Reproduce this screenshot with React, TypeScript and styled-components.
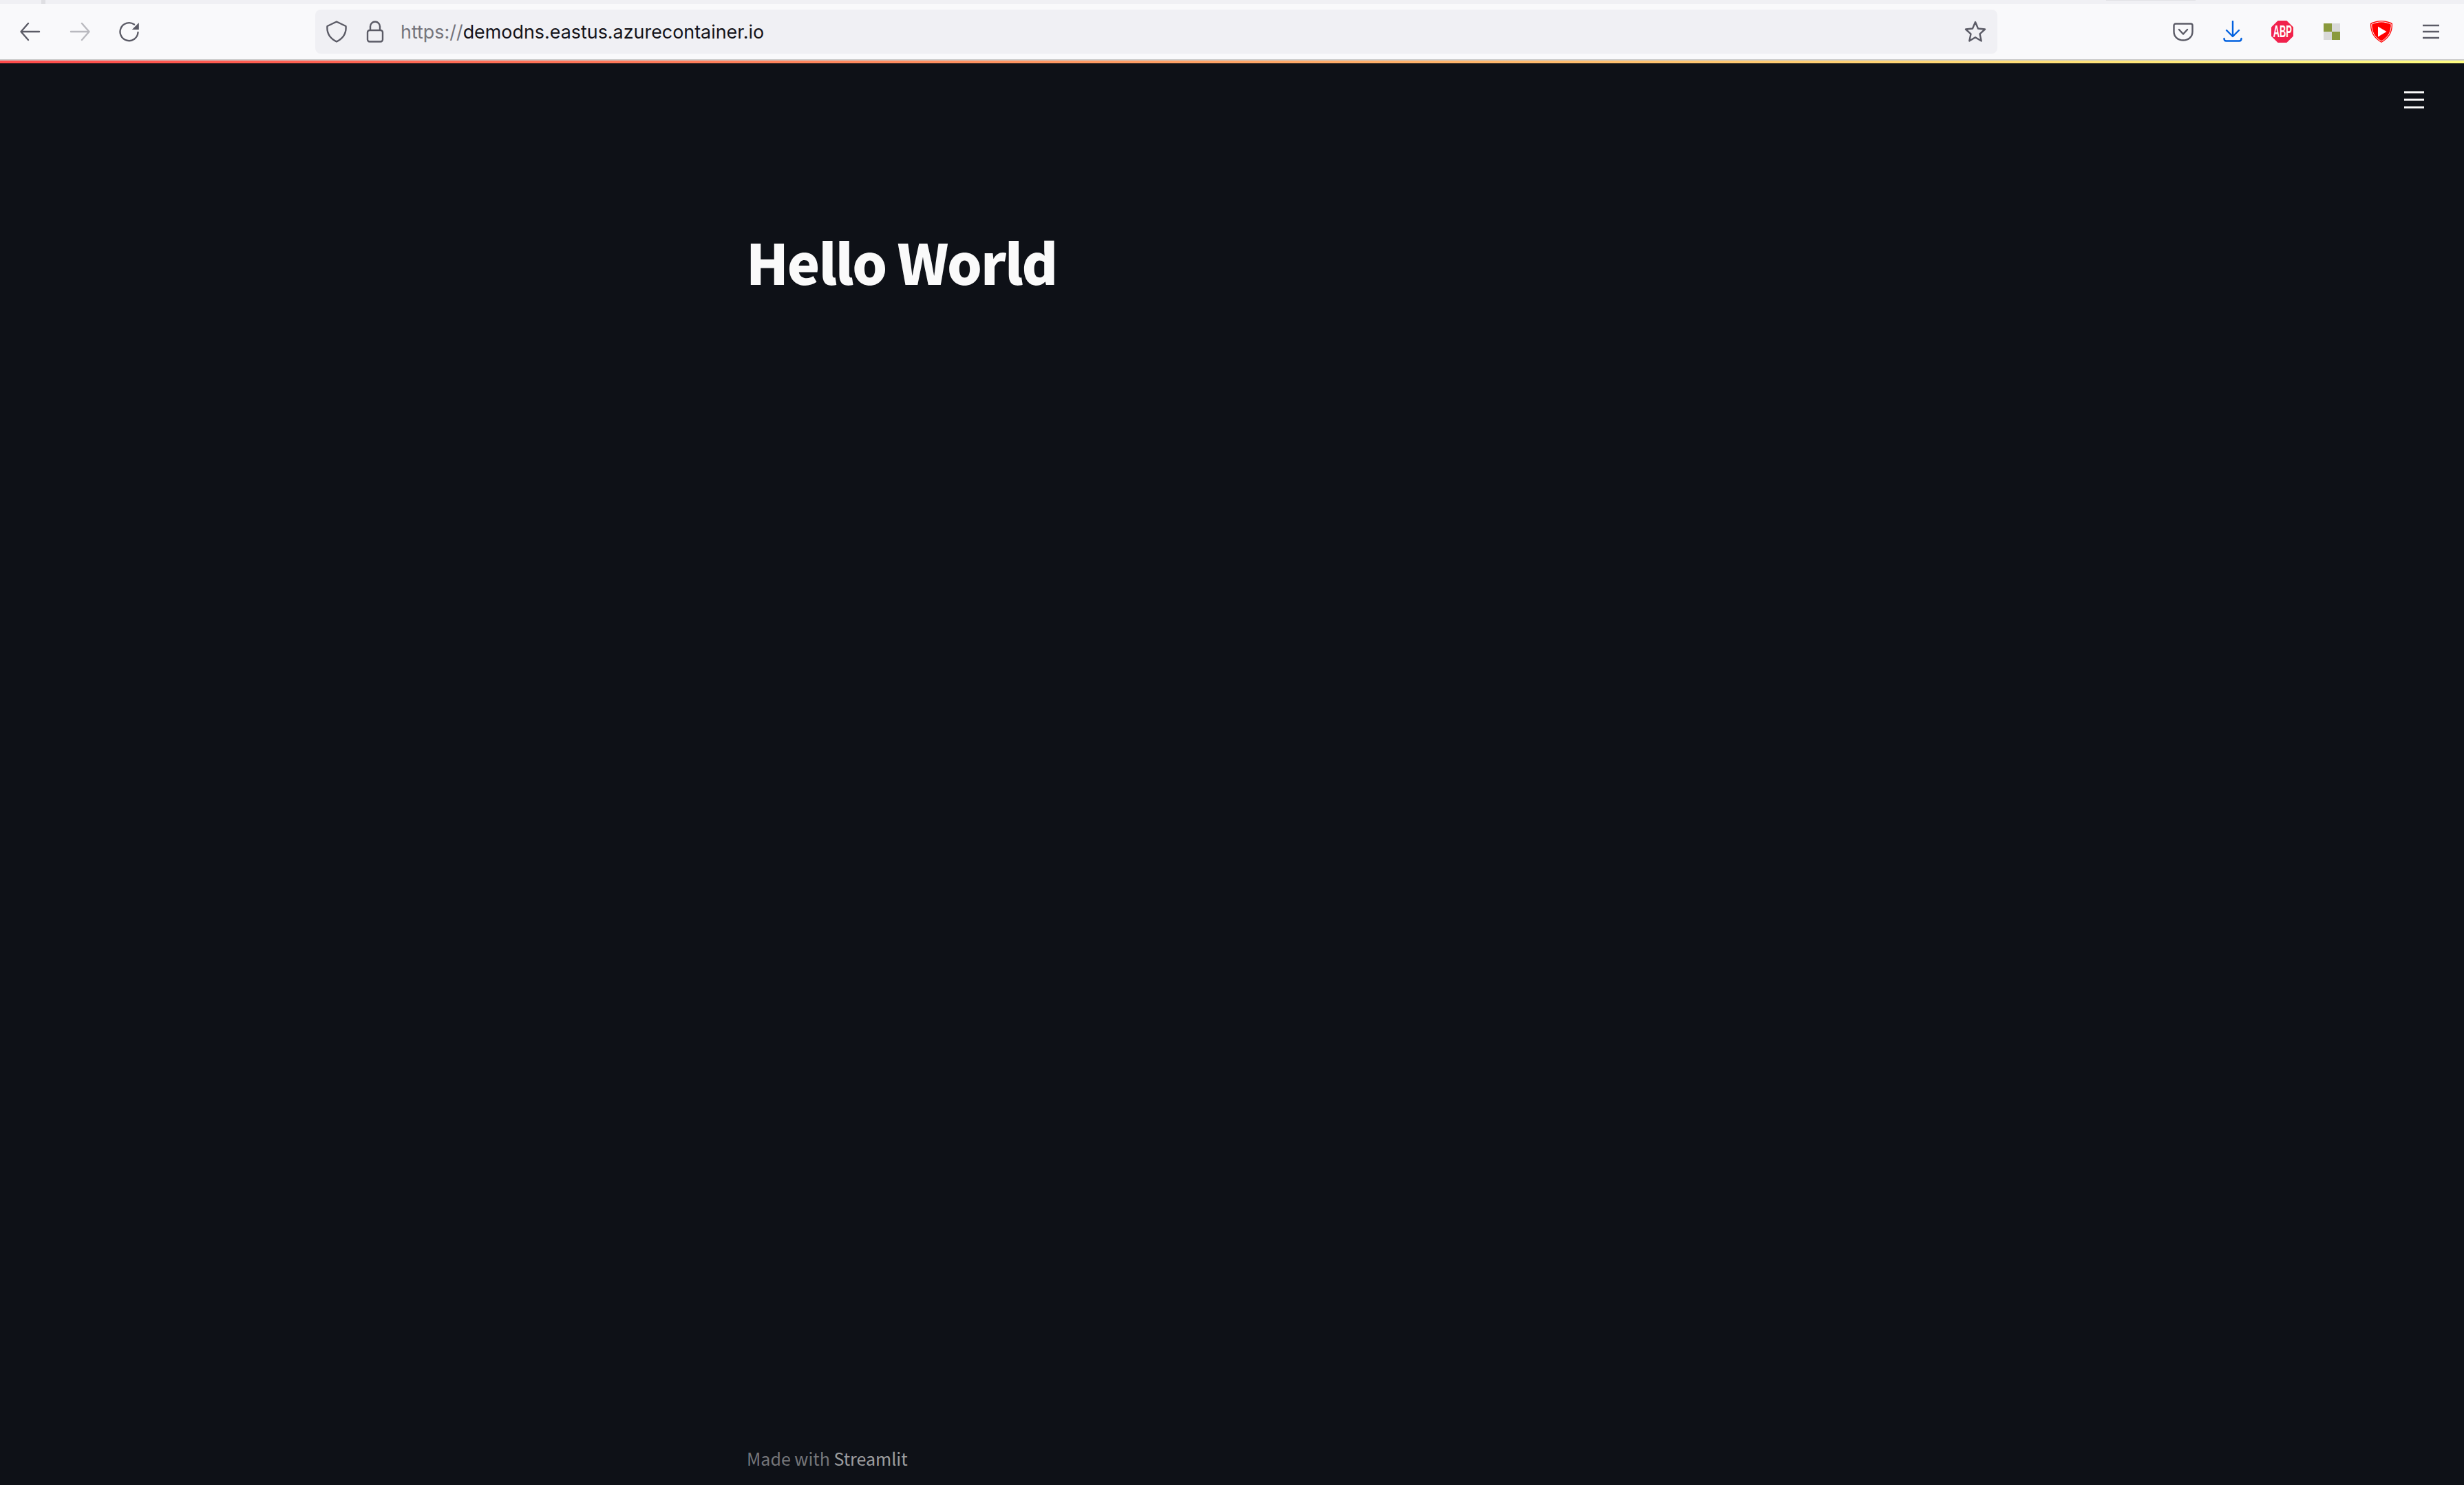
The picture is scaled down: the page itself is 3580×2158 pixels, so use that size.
import React from 'react';
import styled, { createGlobalStyle } from 'styled-components';

const GlobalStyle = createGlobalStyle`
  html, body, #root {
    margin: 0;
    height: 100%;
  }
  body {
    background: #0e1117;
    overflow: hidden;
  }
`;

const App: React.FC = () => (
  <Page>
    <GlobalStyle />
    <TabStrip>
      <TabEdge />
      <TabShadow />
    </TabStrip>
    <Toolbar>
      <NavButton>
        <svg width="32" height="32" viewBox="0 0 32 32" fill="none" stroke="#5b5b66" strokeWidth="2.4" strokeLinecap="round" strokeLinejoin="round">
          <path d="M29 16H3M13 4 2.5 16 13 28" />
        </svg>
      </NavButton>
      <NavButton dimmed>
        <svg width="32" height="32" viewBox="0 0 32 32" fill="none" stroke="#5b5b66" strokeWidth="2.4" strokeLinecap="round" strokeLinejoin="round">
          <path d="M3 16h26M19 4l10.500 12L19 28" />
        </svg>
      </NavButton>
      <NavButton>
        <svg width="32" height="32" viewBox="0 0 32 32" fill="none">
          <path d="M28.500 17A13 13 0 1 1 23 5.500" stroke="#5b5b66" strokeWidth="2.4" strokeLinecap="round" />
          <path d="M29.800 3v10h-10z" fill="#5b5b66" />
        </svg>
      </NavButton>
      <UrlBar>
        <UrlIcon>
          <svg width="32" height="32" viewBox="0 0 32 32" fill="none" stroke="#5b5b66" strokeWidth="2.4" strokeLinejoin="round">
            <path d="M16 1.500 29.500 8c.8 9-3.500 17.500-13.500 22.500C6 25.500 1.700 17 2.500 8z" />
          </svg>
        </UrlIcon>
        <UrlIcon>
          <svg width="32" height="32" viewBox="0 0 32 32" fill="none" stroke="#5b5b66" strokeWidth="2.4" strokeLinejoin="round">
            <rect x="5" y="14" width="22" height="16.500" rx="3" />
            <path d="M9 14V8.500a7 7 0 0 1 14 0V14" />
          </svg>
        </UrlIcon>
        <UrlText>
          <UrlScheme>https://</UrlScheme>demodns.eastus.azurecontainer.io
        </UrlText>
        <svg width="32" height="32" viewBox="0 0 32 32" fill="none" stroke="#5b5b66" strokeWidth="2.4" strokeLinejoin="round">
          <path d="M16 2l4 9.500 10 1-7.500 6.800L24.700 29.500 16 24.200 7.300 29.500l2.200-10.200L2 12.500l10-1z" />
        </svg>
      </UrlBar>
      <NavButton>
        <svg width="32" height="32" viewBox="0 0 32 32" fill="none" stroke="#5b5b66" strokeWidth="2.4" strokeLinecap="round" strokeLinejoin="round">
          <path d="M5 4.500h22a2.500 2.500 0 0 1 2.500 2.500v9c0 7.500-6 12.500-13.500 12.500S2.500 23.500 2.500 16V7A2.500 2.500 0 0 1 5 4.500z" />
          <path d="M10 13l6 6.500 6-6.500" />
        </svg>
      </NavButton>
      <NavButton>
        <svg width="32" height="32" viewBox="0 0 32 32" fill="none" stroke="#0060df" strokeWidth="2.4" strokeLinecap="round" strokeLinejoin="round">
          <path d="M16 1v21M7 14l9 9 9-9M3.500 26c0 2 1 3.500 3 3.500h19c2 0 3-1.500 3-3.500" />
        </svg>
      </NavButton>
      <NavButton>
        <AbpBadge>
          <AbpLabel>ABP</AbpLabel>
        </AbpBadge>
      </NavButton>
      <NavButton>
        <Checker>
          <CheckerCell filled />
          <CheckerCell />
          <CheckerCell />
          <CheckerCell filled />
        </Checker>
      </NavButton>
      <NavButton>
        <svg width="32" height="32" viewBox="0 0 32 32">
          <path d="M16 0c5 0 11 1.500 16 4 .5 11-3.500 21-16 28C3.500 25-.5 15 0 4c5-2.500 11-4 16-4z" fill="#ff0000" />
          <path d="M16 1.800c4.500 0 9.800 1.300 14.200 3.400.2 9.700-3.300 18.600-14.200 24.800C5.100 23.800 1.600 14.900 1.800 5.200 6.200 3.100 11.500 1.800 16 1.800z" fill="none" stroke="#fff" strokeWidth="1" />
          <path d="M11 8.500 23.500 16 11 23.500z" fill="#fff" />
        </svg>
      </NavButton>
      <NavButton>
        <svg width="32" height="32" viewBox="0 0 32 32" fill="none" stroke="#5b5b66" strokeWidth="2.4">
          <path d="M4 7h24M4 16h24M4 25h24" />
        </svg>
      </NavButton>
    </Toolbar>
    <Decoration />
    <Main>
      <MenuButton>
        <svg width="29" height="26" viewBox="0 0 29 26" fill="none" stroke="#fafafa" strokeWidth="3">
          <path d="M0 2h29M0 13h29M0 24h29" />
        </svg>
      </MenuButton>
      <Block>
        <Title>Hello World</Title>
      </Block>
      <Footer>
        Made with <FooterLink>Streamlit</FooterLink>
      </Footer>
    </Main>
  </Page>
);

const Page = styled.div`
  display: flex;
  flex-direction: column;
  height: 100vh;
`;

const TabStrip = styled.div`
  display: flex;
  height: 6px;
  background-color: #f0f0f4;
`;

const TabEdge = styled.div`
  width: 6px;
  margin-left: 60px;
  background-color: #dfdfe3;
`;

const TabShadow = styled.div`
  width: 130px;
  height: 1px;
  margin-left: 2994px;
  background-color: #e2e2e6;
`;

const Toolbar = styled.div`
  display: flex;
  align-items: center;
  height: 80px;
  padding: 0 12px 0 8px;
  box-sizing: border-box;
  background-color: #f9f9fb;
`;

const NavButton = styled.div<{ dimmed?: boolean }>`
  display: flex;
  align-items: center;
  justify-content: center;
  width: 72px;
  height: 64px;
  opacity: ${(props) => (props.dimmed ? 0.4 : 1)};
`;

const UrlBar = styled.div`
  display: flex;
  flex: 1;
  align-items: center;
  height: 64px;
  margin: 0 234px;
  padding: 0 16px 0 15px;
  box-sizing: border-box;
  border-radius: 8px;
  background-color: #f0f0f4;
`;

const UrlIcon = styled.div`
  display: flex;
  width: 32px;
  margin-right: 24px;
  &:nth-child(2) {
    margin-right: 21px;
  }
`;

const UrlText = styled.div`
  flex: 1;
  font-family: Inter, 'Liberation Sans', sans-serif;
  font-size: 26.9px;
  color: #15141a;
  white-space: nowrap;
`;

const UrlScheme = styled.span`
  color: #75757c;
`;

const AbpBadge = styled.div`
  display: flex;
  align-items: center;
  justify-content: center;
  width: 32px;
  height: 32px;
  background-color: #f1214c;
  clip-path: polygon(30% 0, 70% 0, 100% 30%, 100% 70%, 70% 100%, 30% 100%, 0 70%, 0 30%);
`;

const AbpLabel = styled.span`
  font-family: 'Liberation Sans', sans-serif;
  font-size: 23px;
  font-weight: 700;
  line-height: 32px;
  color: #ffffff;
  transform: scaleX(0.56);
`;

const Checker = styled.div`
  display: grid;
  grid-template-columns: 12px 12px;
  grid-auto-rows: 12px;
`;

const CheckerCell = styled.div<{ filled?: boolean }>`
  background-color: ${(props) => (props.filled ? '#8a9a3c' : '#d9d9d9')};
`;

const Decoration = styled.div`
  height: 4px;
  border-top: 2px solid #cccccc;
  background-image: linear-gradient(90deg, #ff4b4b, #fffd80);
`;

const Main = styled.main`
  position: relative;
  display: flex;
  flex: 1;
  flex-direction: column;
  background-color: #0e1117;
`;

const MenuButton = styled.div`
  position: absolute;
  top: 40px;
  right: 58px;
  display: flex;
`;

const Block = styled.div`
  flex: 1;
  width: 1410px;
  margin: 0 auto;
  padding-top: 247px;
  box-sizing: border-box;
`;

const Title = styled.h1`
  margin: 0 0 0 -1px;
  font-family: 'Noto Sans CJK SC', 'Noto Sans', sans-serif;
  font-size: 80px;
  font-weight: 900;
  letter-spacing: -2.1px;
  line-height: 1;
  color: #fafafa;
`;

const Footer = styled.footer`
  width: 1410px;
  margin: 0 auto;
  padding-bottom: 19px;
  font-family: 'Noto Sans CJK SC', 'Noto Sans', sans-serif;
  font-size: 25px;
  line-height: 40px;
  color: rgba(250, 250, 250, 0.44);
`;

const FooterLink = styled.span`
  color: rgba(250, 250, 250, 0.62);
`;

export default App;
